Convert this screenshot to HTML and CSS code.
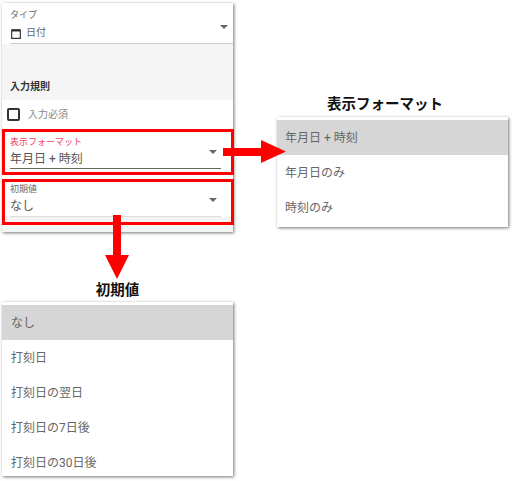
FILE: index.html
```html
<!DOCTYPE html>
<html>
<head>
  <title>入力規則</title>
  <link rel="stylesheet" href="styles.css">
</head>
<body>
<div class="sheet">
  <div class="left">
    <div class="card">
      <div class="type-field">
        <div class="small-label">タイプ</div>
        <div class="type-value">
          <svg class="cal" width="10" height="11" viewBox="0 0 10 11"><path d="M.7 2h8.6v8.3H.7z" fill="none" stroke="#333" stroke-width="1.2"/><path d="M.7 1.2h8.6v2.3H.7z" fill="#333"/></svg>
          <span>日付</span>
        </div>
        <span class="caret type-caret"></span>
      </div>
      <div class="section-head">入力規則</div>
      <div class="check-row">
        <span class="checkbox"></span>
        <span class="check-label">入力必須</span>
      </div>
      <div class="field-box">
        <div class="field active">
          <div class="small-label">表示フォーマット</div>
          <div class="field-value">年月日 + 時刻</div>
          <span class="caret"></span>
        </div>
      </div>
      <div class="field-box second">
        <div class="field">
          <div class="small-label">初期値</div>
          <div class="field-value">なし</div>
          <span class="caret"></span>
        </div>
      </div>
    </div>
    <h2 class="caption caption-left">初期値</h2>
    <ul class="menu">
      <li class="selected">なし</li>
      <li>打刻日</li>
      <li>打刻日の翌日</li>
      <li>打刻日の7日後</li>
      <li>打刻日の30日後</li>
    </ul>
  </div>
  <div class="right">
    <h2 class="caption caption-right">表示フォーマット</h2>
    <ul class="menu">
      <li class="selected">年月日 + 時刻</li>
      <li>年月日のみ</li>
      <li>時刻のみ</li>
    </ul>
  </div>
  <svg class="arrow arrow-right" width="63" height="23" viewBox="0 0 63 23"><path d="M0 8h38V0l25 11.5L38 23v-7H0z" fill="#ff0000"/></svg>
  <svg class="arrow arrow-down" width="24" height="64" viewBox="0 0 24 64"><path d="M8 0h8v40h8L12 64 0 40h8z" fill="#ff0000"/></svg>
</div>
</body>
</html>
```

FILE: styles.css
```css
* {
  box-sizing: border-box;
}

body {
  margin: 0;
  background: #ffffff;
  font-family: "Roboto", "Noto Sans CJK JP", sans-serif;
  color: #555555;
}

.sheet {
  position: relative;
  width: 512px;
  height: 481px;
  overflow: hidden;
  display: flex;
  align-items: flex-start;
  padding: 3px 0 0 2px;
}

.left {
  width: 231px;
}

.right {
  width: 231px;
  margin-left: 44px;
  margin-top: 92px;
}

.card {
  height: 229px;
  box-shadow: 1px 1px 3px rgba(0, 0, 0, 0.55);
  background: linear-gradient(#ffffff 222px, #f5f5f5 222px);
}

.type-field {
  position: relative;
  height: 41px;
  margin-left: 8px;
  padding-top: 6px;
  border-bottom: 1px solid #cccccc;
}

.small-label {
  font-size: 9px;
  line-height: 13px;
  color: #666666;
}

.type-value {
  display: flex;
  align-items: center;
  gap: 5px;
  margin-top: 3px;
  font-size: 10px;
  line-height: 16px;
  color: #666666;
}

.cal {
  margin-left: 1px;
}

.caret {
  position: absolute;
  right: 4px;
  top: 18px;
  border-left: 4px solid transparent;
  border-right: 4px solid transparent;
  border-top: 4px solid #666666;
}

.type-caret {
  right: 5px;
  top: 22px;
}

.section-head {
  height: 56px;
  padding: 34px 0 0 8px;
  background: #f5f5f5;
  font-size: 10px;
  line-height: 18px;
  font-weight: 700;
  color: #333333;
}

.check-row {
  display: flex;
  align-items: center;
  height: 29px;
  padding-left: 5px;
  gap: 8px;
}

.checkbox {
  width: 13px;
  height: 13px;
  border: 2px solid #333333;
  border-radius: 2px;
}

.check-label {
  font-size: 10px;
  margin-top: -2px;
  color: #888888;
}

.field-box {
  height: 46px;
  width: 232px;
  border: 3px solid #ff0000;
  background: #ffffff;
}

.second {
  margin-top: 4px;
  background: linear-gradient(#ffffff 35px, #f5f5f5 35px);
}

.field {
  position: relative;
  height: 37px;
  margin: 0 10px 0 5px;
  padding-top: 4px;
  border-bottom: 1px solid #666666;
}

.field .field-value {
  margin-top: 1px;
}

.second .field {
  height: 35px;
  padding-top: 1px;
  border-bottom: 1px solid #dddddd;
}

.second .field .caret {
  top: 16px;
}

.active .small-label {
  color: #ee4466;
}

.field-value {
  font-size: 12px;
  line-height: 18px;
  color: #555555;
}

.caption {
  margin: 0;
  text-align: center;
  font-size: 14.5px;
  line-height: 20px;
  font-weight: 700;
  color: #111111;
}

.caption-left {
  margin-top: 49px;
}

.caption-right {
  padding-right: 15px;
}

.menu {
  list-style: none;
  margin: 1px 0 0;
  padding: 3px 0 0;
  height: 174px;
  background: #ffffff;
  box-shadow: 1px 1px 3px rgba(0, 0, 0, 0.55);
}

.right .menu {
  height: 110px;
  margin-top: 2px;
}

.menu li {
  height: 35px;
  padding-left: 9px;
  font-size: 12px;
  line-height: 36px;
  color: #666666;
}

.right .menu li {
  padding-left: 8px;
}

.menu .selected {
  background: #d6d6d6;
}

.arrow {
  position: absolute;
}

.arrow-right {
  left: 223px;
  top: 140px;
}

.arrow-down {
  left: 105px;
  top: 215px;
}
```
